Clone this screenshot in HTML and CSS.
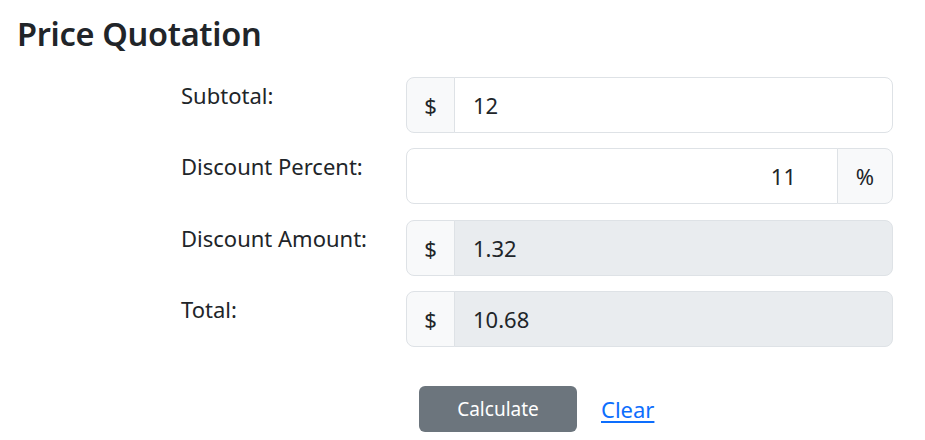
FILE: index.html
```html
<!DOCTYPE html>
<html lang="en">
<head>
<meta charset="utf-8">
<title>Price Quotation</title>
<link rel="stylesheet" href="styles.css">
</head>
<body>
<main class="page">
  <h1 class="title">Price Quotation</h1>
  <form class="quote-form">
    <div class="form-row">
      <label class="form-label" for="subtotal">Subtotal:</label>
      <div class="input-group">
        <span class="addon addon-start">$</span>
        <input class="field field-end" id="subtotal" type="text" value="12">
      </div>
    </div>
    <div class="form-row">
      <label class="form-label" for="percent">Discount Percent:</label>
      <div class="input-group">
        <input class="field field-start field-right" id="percent" type="text" value="11">
        <span class="addon addon-end">%</span>
      </div>
    </div>
    <div class="form-row">
      <label class="form-label" for="amount">Discount Amount:</label>
      <div class="input-group">
        <span class="addon addon-start">$</span>
        <input class="field field-end field-readonly" id="amount" type="text" value="1.32" readonly>
      </div>
    </div>
    <div class="form-row">
      <label class="form-label" for="total">Total:</label>
      <div class="input-group">
        <span class="addon addon-start">$</span>
        <input class="field field-end field-readonly" id="total" type="text" value="10.68" readonly>
      </div>
    </div>
    <div class="actions">
      <button type="button" class="btn-calc">Calculate</button>
      <a href="#" class="link-clear">Clear</a>
    </div>
  </form>
</main>
</body>
</html>
```
FILE: styles.css
```css
* { box-sizing: border-box; }
html, body { margin: 0; padding: 0; background: #fff; }
body {
  font-family: "Noto Sans", "Open Sans", sans-serif;
  color: #212529;
}
.page {
  padding: 8px 0 0 17px;
}
.title {
  margin: 0;
  font-size: 32.5px;
  font-weight: 600;
  line-height: 52px;
  letter-spacing: -0.3px;
}
.quote-form {
  margin-top: 17px;
  padding-left: 164px;
}
.form-row {
  display: grid;
  grid-template-columns: 225px 487px;
  margin-bottom: 15.4px;
}
.form-label {
  font-size: 22px;
  line-height: 30px;
  padding-top: 3px;
}
.input-group {
  display: flex;
  height: 56px;
}
.addon {
  display: flex;
  align-items: center;
  justify-content: center;
  background: #f8f9fa;
  border: 1px solid #dee2e6;
  font-size: 22px;
  color: #212529;
}
.addon-start {
  width: 49px;
  border-radius: 8px 0 0 8px;
}
.addon-end {
  width: 56px;
  border-radius: 0 8px 8px 0;
  margin-left: -1px;
}
.field {
  flex: 1;
  min-width: 0;
  height: 56px;
  border: 1px solid #dee2e6;
  background: #fff;
  font: inherit;
  font-size: 22px;
  color: #212529;
  padding: 0 18px;
  outline: none;
}
.field-end {
  border-radius: 0 8px 8px 0;
  margin-left: -1px;
}
.field-start {
  border-radius: 8px 0 0 8px;
}
.field-right {
  text-align: right;
  padding-right: 41px;
}
.field-readonly {
  background: #e9ecef;
}
.actions {
  display: flex;
  align-items: center;
  gap: 24px;
  margin-top: 39px;
  padding-left: 238px;
}
.btn-calc {
  width: 158px;
  height: 46px;
  border: none;
  border-radius: 6px;
  background: #6c757d;
  color: #fff;
  font: inherit;
  font-size: 19px;
  cursor: pointer;
}
.link-clear {
  color: #0d6efd;
  font-size: 22px;
  text-decoration: underline;
  text-underline-offset: 3px;
}
```
